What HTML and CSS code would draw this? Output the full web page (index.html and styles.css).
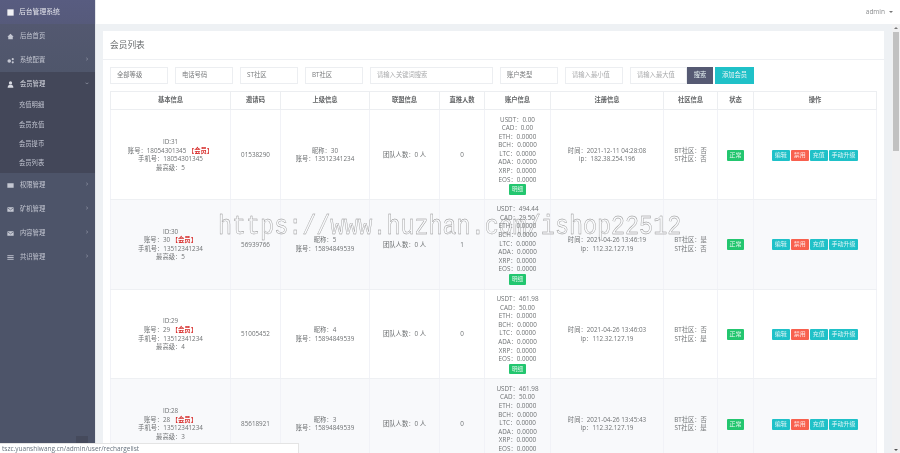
FILE: index.html
```html
<!DOCTYPE html>
<html lang="zh-CN">
<head>
<meta charset="utf-8">
<title>会员列表</title>
<link rel="stylesheet" href="styles.css">
</head>
<body>
<div class="app">
  <aside class="sidebar">
    <div class="brand"><svg class="ico" viewBox="0 0 10 10"><rect x="1.5" y="1.5" width="7" height="7" fill="#f1f1f5"/></svg><span>后台管理系统</span></div>
    <div class="nav-top">
      <a class="item"><svg class="ico" viewBox="0 0 10 10"><path d="M5 2 1.5 5.200 2.500 5.200V8H7.500V5.200H8.500Z" fill="#c4c7d2"/></svg><span>后台首页</span></a>
      <a class="item"><svg class="ico" viewBox="0 0 10 10"><circle cx="3.600" cy="5.500" r="2" fill="#c4c7d2"/><circle cx="7.500" cy="3.500" r="1.200" fill="#c4c7d2"/><circle cx="7.500" cy="7" r="1.200" fill="#c4c7d2"/></svg><span>系统配置</span><i class="chev">›</i></a>
    </div>
    <div class="open-group">
      <a class="item"><svg class="ico" viewBox="0 0 10 10"><circle cx="5" cy="3.200" r="1.800" fill="#d8dae2"/><path d="M1.800 8.500C1.800 6 3.500 5.400 5 5.400S8.200 6 8.200 8.500Z" fill="#d8dae2"/></svg><span>会员管理</span><i class="chev down">›</i></a>
      <a class="sub">充值明细</a>
      <a class="sub">会员充值</a>
      <a class="sub">会员提币</a>
      <a class="sub">会员列表</a>
    </div>
    <a class="item"><svg class="ico" viewBox="0 0 10 10"><rect x="1.500" y="2.500" width="7" height="5" fill="#c4c7d2"/></svg><span>权限管理</span><i class="chev">›</i></a>
    <a class="item"><svg class="ico" viewBox="0 0 10 10"><rect x="1.500" y="2.500" width="7" height="5" fill="#c4c7d2"/><path d="M1.500 3 5 5.500 8.500 3" fill="none" stroke="#4d5469" stroke-width=".7"/></svg><span>矿机管理</span><i class="chev">›</i></a>
    <a class="item"><svg class="ico" viewBox="0 0 10 10"><rect x="1.500" y="2.500" width="7" height="5" fill="#c4c7d2"/><path d="M1.500 3 5 5.500 8.500 3" fill="none" stroke="#4d5469" stroke-width=".7"/></svg><span>内容管理</span><i class="chev">›</i></a>
    <a class="item"><svg class="ico" viewBox="0 0 10 10"><path d="M1.500 3H8.500M1.500 5H8.500M1.500 7H8.500" stroke="#c4c7d2" stroke-width="1"/></svg><span>共识管理</span><i class="chev">›</i></a>
  </aside>
  <div class="main">
    <header class="topbar"><span class="user">admin</span><i class="caret"></i></header>
    <div class="workspace">
      <div class="content">
        <section class="card">
          <h1 class="card-title">会员列表</h1>
          <div class="card-body">
            <form class="filters">
              <div class="field w58 dark">全部等级</div>
              <div class="field w58 dark">电话号码</div>
              <div class="field w58 dark">ST社区</div>
              <div class="field w58 dark">BT社区</div>
              <div class="field w123">请输入关键词搜索</div>
              <div class="field w58 dark">账户类型</div>
              <div class="field w58">请输入最小值</div>
              <div class="field w57">请输入最大值</div>
              <button type="button" class="btn-search">搜索</button>
              <button type="button" class="btn-add">添加会员</button>
            </form>
            <table class="grid">
              <colgroup>
                <col class="c1"><col class="c2"><col class="c3"><col class="c4"><col class="c5"><col class="c6"><col class="c7"><col class="c8"><col class="c9"><col class="c10">
              </colgroup>
              <thead>
                <tr><th>基本信息</th><th>邀请码</th><th>上级信息</th><th>联盟信息</th><th>直推人数</th><th>账户信息</th><th>注册信息</th><th>社区信息</th><th>状态</th><th>操作</th></tr>
              </thead>
              <tbody>
                <tr>
                  <td>ID:31<br>账号：18054301345 <b>【会员】</b><br>手机号：18054301345<br>最高级：5</td>
                  <td>01538290</td>
                  <td>昵称：30<br>账号：13512341234</td>
                  <td>团队人数：0 人</td>
                  <td>0</td>
                  <td>USDT：0.00<br>CAD：0.00<br>ETH：0.0000<br>BCH：0.0000<br>LTC：0.0000<br>ADA：0.0000<br>XRP：0.0000<br>EOS：0.0000<br><span class="tag">明细</span></td>
                  <td>时间：2021-12-11 04:28:08<br>ip：182.38.254.196</td>
                  <td>BT社区：否<br>ST社区：否</td>
                  <td><span class="tag wide">正常</span></td>
                  <td><div class="ops"><span class="op">编辑</span><span class="op red">禁用</span><span class="op">充值</span><span class="op long">手动升级</span></div></td>
                </tr>
                <tr>
                  <td>ID:30<br>账号：30 <b>【会员】</b><br>手机号：13512341234<br>最高级：5</td>
                  <td>56939766</td>
                  <td>昵称：5<br>账号：15894849539</td>
                  <td>团队人数：0 人</td>
                  <td>1</td>
                  <td>USDT：494.44<br>CAD：29.50<br>ETH：0.0000<br>BCH：0.0000<br>LTC：0.0000<br>ADA：0.0000<br>XRP：0.0000<br>EOS：0.0000<br><span class="tag">明细</span></td>
                  <td>时间：2021-04-26 13:46:19<br>ip：112.32.127.19</td>
                  <td>BT社区：是<br>ST社区：否</td>
                  <td><span class="tag wide">正常</span></td>
                  <td><div class="ops"><span class="op">编辑</span><span class="op red">禁用</span><span class="op">充值</span><span class="op long">手动升级</span></div></td>
                </tr>
                <tr>
                  <td>ID:29<br>账号：29 <b>【会员】</b><br>手机号：13512341234<br>最高级：4</td>
                  <td>51005452</td>
                  <td>昵称：4<br>账号：15894849539</td>
                  <td>团队人数：0 人</td>
                  <td>0</td>
                  <td>USDT：461.98<br>CAD：50.00<br>ETH：0.0000<br>BCH：0.0000<br>LTC：0.0000<br>ADA：0.0000<br>XRP：0.0000<br>EOS：0.0000<br><span class="tag">明细</span></td>
                  <td>时间：2021-04-26 13:46:03<br>ip：112.32.127.19</td>
                  <td>BT社区：否<br>ST社区：是</td>
                  <td><span class="tag wide">正常</span></td>
                  <td><div class="ops"><span class="op">编辑</span><span class="op red">禁用</span><span class="op">充值</span><span class="op long">手动升级</span></div></td>
                </tr>
                <tr>
                  <td>ID:28<br>账号：28 <b>【会员】</b><br>手机号：13512341234<br>最高级：3</td>
                  <td>85618921</td>
                  <td>昵称：3<br>账号：15894849539</td>
                  <td>团队人数：0 人</td>
                  <td>0</td>
                  <td>USDT：461.98<br>CAD：50.00<br>ETH：0.0000<br>BCH：0.0000<br>LTC：0.0000<br>ADA：0.0000<br>XRP：0.0000<br>EOS：0.0000<br><span class="tag">明细</span></td>
                  <td>时间：2021-04-26 13:45:43<br>ip：112.32.127.19</td>
                  <td>BT社区：否<br>ST社区：是</td>
                  <td><span class="tag wide">正常</span></td>
                  <td><div class="ops"><span class="op">编辑</span><span class="op red">禁用</span><span class="op">充值</span><span class="op long">手动升级</span></div></td>
                </tr>
              </tbody>
            </table>
          </div>
        </section>
      </div>
      <div class="scrollbar"><i class="arrow up"></i><div class="thumb"></div><i class="arrow dn"></i></div>
    </div>
  </div>
  <div class="collapse-tab"></div>
  <div class="statusbar">tszc.yuanshiwang.cn/admin/user/rechargelist</div>
</div>
<div class="watermark">https://www.huzhan.com/ishop22512</div>
</body>
</html>
```
FILE: styles.css
```css
* { box-sizing: border-box; }
html, body { margin: 0; height: 100%; overflow: hidden; background: #fff; }
body {
  position: relative;
  font-family: "Open Sans", "Noto Sans CJK SC", sans-serif;
  font-size: 6.3px;
  line-height: 8.6px;
  color: #6f7274;
}
.app { display: flex; width: 900px; height: 453px; overflow: hidden; filter: blur(.6px); position: relative; }

/* sidebar */
.sidebar { width: 96px; flex: none; background: #4d5469; border-right: 1px solid #e3e6ea; color: #c4c7d2; }
.brand { height: 24px; display: flex; align-items: center; padding-left: 6px; gap: 4px; background: linear-gradient(#585c80, #565a7b); color: #e4e5ec; font-size: 6.8px; }
.nav-top { background: linear-gradient(#535870, #4f566b); }
.item { height: 24px; display: flex; align-items: center; padding-left: 6px; gap: 5px; position: relative; }
.ico { width: 9px; height: 9px; flex: none; }
.chev { position: absolute; left: 86px; top: 7px; font-style: normal; font-size: 7px; color: #9da1b0; }
.chev.down { transform: rotate(90deg); }
.open-group { background: #434759; }
.open-group .item { color: #d8dae2; }
.sub { display: flex; align-items: center; height: 19.300px; padding-left: 19px; color: #bfc2ce; }

/* main */
.main { flex: 1; min-width: 0; display: flex; flex-direction: column; }
.topbar { height: 24px; flex: none; background: #fff; display: flex; align-items: center; justify-content: flex-end; padding-right: 7px; gap: 4px; }
.user { color: #8a8c8e; font-size: 6.5px; }
.caret { width: 0; height: 0; border: 2px solid transparent; border-top-color: #777; border-bottom: 0; }
.workspace { flex: 1; min-height: 0; display: flex; background: #eef1f4; }
.content { flex: 1; min-width: 0; padding: 7px 8px 0 7px; overflow: hidden; }
.scrollbar { width: 8px; flex: none; background: #f1f1f2; padding: 0 1px; display: flex; flex-direction: column; align-items: center; position: relative; }
.thumb { width: 6px; height: 119px; margin-top: 8px; background: #c1c1c1; }
.arrow { position: absolute; left: 2px; width: 0; height: 0; border: 2px solid transparent; }
.arrow.up { top: 3px; border-top: 0; border-bottom-color: #777; }
.arrow.dn { bottom: 2px; border-bottom: 0; border-top-color: #555; }

/* card */
.card { background: #fff; }
.card-title { margin: 0; height: 29px; padding-left: 7px; display: flex; align-items: center; font-size: 8.700px; font-weight: 400; color: #676a6c; border-bottom: 1px solid #eef0f3; }
.card-body { padding: 7px 7px 0 7px; }

/* filters */
.filters { display: flex; height: 17px; margin-bottom: 7px; }
.field { height: 17px; border: 1px solid #eceef1; padding-left: 6px; display: flex; align-items: center; color: #a8a9ab; margin-right: 7px; flex: none; }
.field.dark { color: #77797b; }
.w58 { width: 58px; }
.w123 { width: 123px; }
.w57 { width: 57px; margin-right: 0; }
.btn-search, .btn-add { height: 17px; border: 0; padding: 0; font: inherit; color: #e8f4f5; flex: none; }
.btn-search { width: 26px; background: #565a73; }
.btn-add { width: 39px; margin-left: 2px; background: #1fc1c8; }

/* table */
.grid { width: 766px; table-layout: fixed; border-collapse: collapse; border: 1px solid #e9ebee; }
.c1 { width: 120px; } .c2 { width: 50px; } .c3 { width: 89px; } .c4 { width: 70px; } .c5 { width: 45px; }
.c6 { width: 66px; } .c7 { width: 113px; } .c8 { width: 54px; } .c9 { width: 36px; } .c10 { width: 123px; }
.grid th { height: 18px; padding: 0; font-weight: 600; color: #606264; border: 1px solid #eceef1; }
.grid td { padding: 5.500px 0 4px; text-align: center; vertical-align: middle; border-left: 1px solid #f1f2f7; border-right: 1px solid #f1f2f7; border-bottom: 1px solid #eef0f3; }
.grid tbody tr:nth-child(even) td { background: #f8f9fb; }
.grid b { color: #d8312f; font-weight: 700; }
.tag { display: inline-block; width: 17px; height: 10.500px; line-height: 10.500px; background: #23c66f; color: #e3f7ec; border-radius: 1px; font-size: 5.500px; vertical-align: top; }
.tag.wide { height: 11px; line-height: 11px; font-size: 6px; }
.ops { display: flex; justify-content: center; gap: 1.500px; }
.op { width: 17.500px; height: 11px; line-height: 11px; background: #1fc1c8; color: #dff5f6; border-radius: 1px; font-size: 6px; }
.op.red { background: #f8604e; color: #fde5e2; }
.op.long { width: 29px; }

/* overlays */
.collapse-tab { position: absolute; left: 76px; top: 436px; width: 12px; height: 8px; background: #454a5c; }
.statusbar { position: absolute; left: 0; bottom: 0; width: 299px; height: 10px; line-height: 9px; padding-left: 2px; background: #fff; border: 1px solid #e4e4e4; border-left: 0; border-bottom: 0; font-size: 6.500px; color: #68737f; }
.watermark { position: absolute; left: 218px; top: 211px; font-family: "Liberation Mono", monospace; font-size: 23.400px; line-height: 33px; white-space: nowrap; color: transparent; -webkit-text-stroke: .35px #8b8b8b; transform-origin: left center; transform: scaleY(1.15); pointer-events: none; }
```
